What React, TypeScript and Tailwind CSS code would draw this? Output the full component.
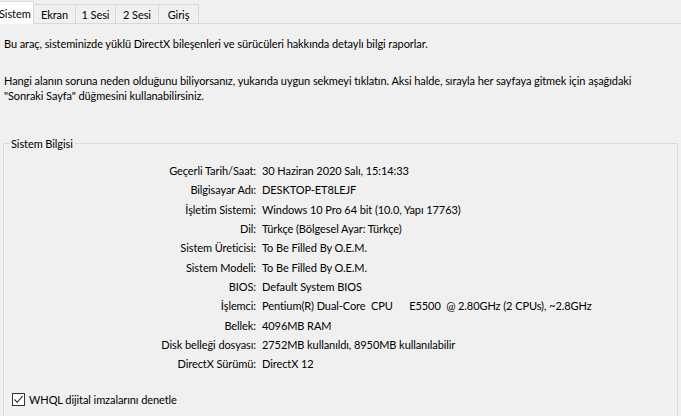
const tabs = ["Ekran", "1 Sesi", "2 Sesi", "Giriş"];

const rows: [string, string][] = [
  ["Geçerli Tarih/Saat:", "30 Haziran 2020 Salı, 15:14:33"],
  ["Bilgisayar Adı:", "DESKTOP-ET8LEJF"],
  ["İşletim Sistemi:", "Windows 10 Pro 64 bit (10.0, Yapı 17763)"],
  ["Dil:", "Türkçe (Bölgesel Ayar: Türkçe)"],
  ["Sistem Üreticisi:", "To Be Filled By O.E.M."],
  ["Sistem Modeli:", "To Be Filled By O.E.M."],
  ["BIOS:", "Default System BIOS"],
  ["İşlemci:", "Pentium(R) Dual-Core  CPU      E5500  @ 2.80GHz (2 CPUs), ~2.8GHz"],
  ["Bellek:", "4096MB RAM"],
  ["Disk belleği dosyası:", "2752MB kullanıldı, 8950MB kullanılabilir"],
  ["DirectX Sürümü:", "DirectX 12"],
];

export default function App() {
  return (
    <div className="w-[681px] h-[416px] overflow-hidden bg-[#f0f0f0] text-black font-['Lato',sans-serif] text-[11px] leading-[15px] tracking-[-0.08px]">
      {/* tab strip */}
      <div className="flex items-end h-[24px] border-b border-[#d9d9d9]">
        <div className="relative z-10 -ml-[4px] mb-[-1px] flex items-center h-[23px] w-[38px] pl-[2px] bg-white border border-b-0 border-[#d9d9d9]">
          Sistem
        </div>
        {tabs.map((t, i) => (
          <div
            key={t}
            className={`flex items-center justify-center h-[19px] border-t border-r border-[#d9d9d9] ${
              i === 0 ? "w-[42px]" : i === 1 ? "w-[40px]" : i === 2 ? "w-[43px]" : "w-[40px]"
            }`}
          >
            {t}
          </div>
        ))}
      </div>

      <div className="pl-[4px] pt-[12px] whitespace-nowrap">
        <p>Bu araç, sisteminizde yüklü DirectX bileşenleri ve sürücüleri hakkında detaylı bilgi raporlar.</p>
        <p className="mt-[22px]">
          Hangi alanın soruna neden olduğunu biliyorsanız, yukarıda uygun sekmeyi tıklatın. Aksi halde, sırayla her sayfaya gitmek için aşağıdaki
        </p>
        <p>"Sonraki Sayfa" düğmesini kullanabilirsiniz.</p>
      </div>

      <fieldset className="ml-[3px] mt-[33px] w-[675px] h-[300px] border border-[#dcdcdc]">
        <legend className="ml-[5px] px-[2px]">Sistem Bilgisi</legend>
        <div className="pt-[10px] flex flex-col">
          {rows.map(([k, v]) => (
            <div key={k} className="flex items-center h-[19.33px] whitespace-pre">
              <span className="w-[252px] text-right">{k}</span>
              <span className="ml-[6px]">{v}</span>
            </div>
          ))}
        </div>
        <label className="mt-[18px] ml-[8px] flex items-center gap-[4px]">
          <span className="flex items-center justify-center w-[13px] h-[13px] bg-white border border-[#333]">
            <svg width="11" height="11" viewBox="0 0 11 11" fill="none">
              <path d="M1.5 5.5 L4.2 8.3 L9.6 2.2" stroke="#222" strokeWidth="1.1" />
            </svg>
          </span>
          <span>WHQL dijital imzalarını denetle</span>
        </label>
      </fieldset>
    </div>
  );
}
